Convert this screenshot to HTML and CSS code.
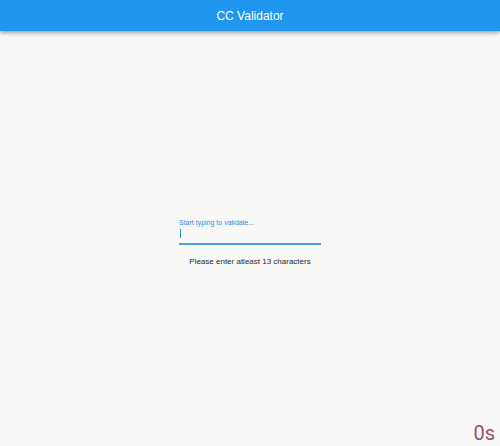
FILE: index.html
```html
<!DOCTYPE html>
<html>
<head>
<meta charset="utf-8">
<link rel="stylesheet" href="styles.css">
</head>
<body>
<header class="appbar">CC Validator</header>
<main class="content">
  <div class="field">
    <label class="label">Start typing to validate...</label>
    <div class="input"><span class="cursor"></span></div>
    <p class="helper">Please enter atleast 13 characters</p>
  </div>
</main>
<div class="timer">0s</div>
</body>
</html>
```
FILE: styles.css
```css
html, body {
  margin: 0;
  padding: 0;
  width: 500px;
  height: 446px;
  overflow: hidden;
  background: #f8f8f6;
  font-family: "Liberation Sans", Arial, sans-serif;
}
.appbar {
  height: 31px;
  background: #2196ee;
  color: #ffffff;
  font-size: 12px;
  display: flex;
  align-items: center;
  justify-content: center;
  box-shadow: 0 2px 4px rgba(0,0,0,0.35);
  position: relative;
  z-index: 1;
}
.content {
  display: flex;
  justify-content: center;
  padding-top: 188px;
}
.field {
  width: 142px;
  display: flex;
  flex-direction: column;
}
.label {
  font-size: 7px;
  color: #2b8ee0;
  line-height: 8px;
  height: 8px;
}
.input {
  height: 16px;
  border-bottom: 2px solid #4a9fe6;
  display: flex;
  align-items: center;
  padding-left: 1px;
}
.cursor {
  width: 1px;
  height: 9px;
  background: #2d7fd0;
  margin-top: -3px;
}
.helper {
  margin: 11px 0 0 0;
  font-size: 8px;
  color: #2a2a2a;
  text-align: center;
  line-height: 12px;
}
.timer {
  position: absolute;
  right: 5px;
  bottom: 3px;
  font-family: Roboto, "Liberation Sans", sans-serif;
  font-size: 20px;
  color: #9b4d6c;
  line-height: 20px;
}
```
